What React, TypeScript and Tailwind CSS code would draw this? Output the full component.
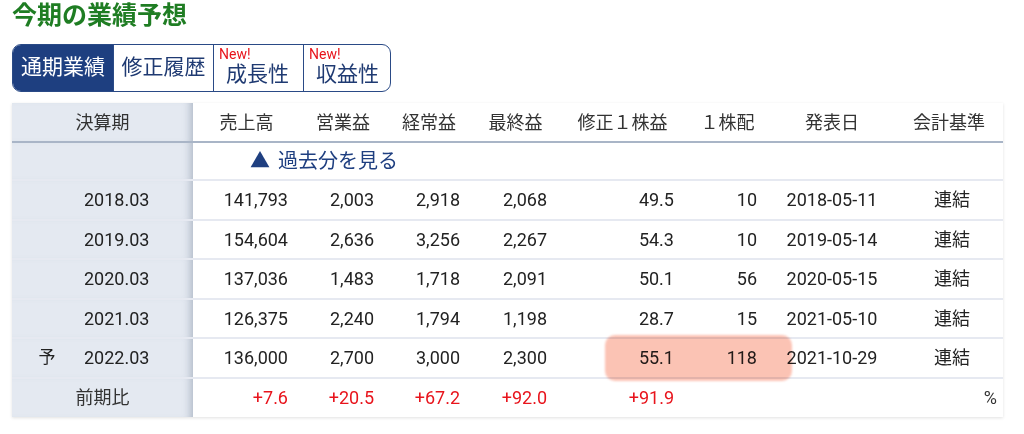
import React from "react";

const cols = "grid grid-cols-[181px_107px_86px_86px_87px_127px_83px_126px_108px]";

const rows = [
  { pre: "", y: "2018.03", v: ["141,793", "2,003", "2,918", "2,068", "49.5", "10"], d: "2018-05-11" },
  { pre: "", y: "2019.03", v: ["154,604", "2,636", "3,256", "2,267", "54.3", "10"], d: "2019-05-14" },
  { pre: "", y: "2020.03", v: ["137,036", "1,483", "1,718", "2,091", "50.1", "56"], d: "2020-05-15" },
  { pre: "", y: "2021.03", v: ["126,375", "2,240", "1,794", "1,198", "28.7", "15"], d: "2021-05-10" },
  { pre: "予", y: "2022.03", v: ["136,000", "2,700", "3,000", "2,300", "55.1", "118"], d: "2021-10-29" },
];

const headers = ["売上高", "営業益", "経常益", "最終益", "修正１株益", "１株配", "発表日", "会計基準"];

const leftCell =
  "bg-[#e4e9f1] shadow-[inset_-9px_0_8px_-7px_rgba(60,80,110,0.35)]";

export default function App() {
  return (
    <div
      className="w-[1024px] h-[434px] bg-white overflow-hidden px-[12px] text-[#222]"
      style={{ fontFamily: 'Roboto, "Noto Sans CJK JP", sans-serif' }}
    >
      <h1 className="text-[25px] leading-8 font-bold text-[#1f7d23]">今期の業績予想</h1>

      <div className="mt-[12px] flex w-[379px] h-[48px] rounded-[9px] border-[1.5px] border-[#2a4a86] overflow-hidden text-[#1f3a72] text-[21px]">
        <div className="w-[100px] bg-[#1e3f80] text-white flex items-center justify-center">通期業績</div>
        <div className="w-[100px] border-l-[1.5px] border-[#2a4a86] flex items-center justify-center">修正履歴</div>
        <div className="w-[90px] border-l-[1.5px] border-[#2a4a86] flex flex-col pl-[5px] pt-[2px]">
          <span className="text-[14px] leading-[14px] text-[#e8141c]">New!</span>
          <span className="leading-[26px] pl-[7px]">成長性</span>
        </div>
        <div className="flex-1 border-l-[1.5px] border-[#2a4a86] flex flex-col pl-[5px] pt-[2px]">
          <span className="text-[14px] leading-[14px] text-[#e8141c]">New!</span>
          <span className="leading-[26px] pl-[7px]">収益性</span>
        </div>
      </div>

      <div className="relative mt-[11px] w-[991px] shadow-[0_1px_3px_rgba(0,0,0,0.12)] text-[18px]">
        <div className={`${cols} h-[40px] border-b-2 border-[#a9b5c7] text-[#333]`}>
          <div className={`${leftCell} flex items-center justify-center`}>決算期</div>
          {headers.map((h) => (
            <div key={h} className="flex items-center justify-center">{h}</div>
          ))}
        </div>

        <div className="grid grid-cols-[181px_810px] h-[38px] border-b-2 border-[#e6e9f1]">
          <div className={leftCell}></div>
          <div className="flex items-center pl-[57px] text-[20px] text-[#1f3f80]">
            <span className="mr-[8px]">▲</span>過去分を見る
          </div>
        </div>

        {rows.map((r) => (
          <div key={r.y} className={`${cols} h-[39.5px] border-b-2 border-[#e6e9f1]`}>
            <div className={`${leftCell} flex items-center`}>
              <span className="w-[70px] text-center text-[17px]">{r.pre}</span>
              <span className="pl-[2px]">{r.y}</span>
            </div>
            {r.v.map((x, i) => (
              <div key={i} className="flex items-center justify-end pr-[12px]">{x}</div>
            ))}
            <div className="flex items-center justify-center">{r.d}</div>
            <div className="flex items-center justify-center pl-[6px]">連結</div>
          </div>
        ))}

        <div className={`${cols} h-[38px] text-[#e8141c]`}>
          <div className={`${leftCell} flex items-center justify-center text-[#333]`}>前期比</div>
          {["+7.6", "+20.5", "+67.2", "+92.0", "+91.9"].map((x) => (
            <div key={x} className="flex items-center justify-end pr-[12px]">{x}</div>
          ))}
          <div></div>
          <div></div>
          <div className="flex items-center justify-end pr-[6px] text-[#333]">%</div>
        </div>

        <div className="absolute left-[593px] top-[232px] w-[187px] h-[46px] rounded-[10px] bg-[#f8876a] opacity-50 mix-blend-multiply blur-[1px]"></div>
      </div>
    </div>
  );
}
